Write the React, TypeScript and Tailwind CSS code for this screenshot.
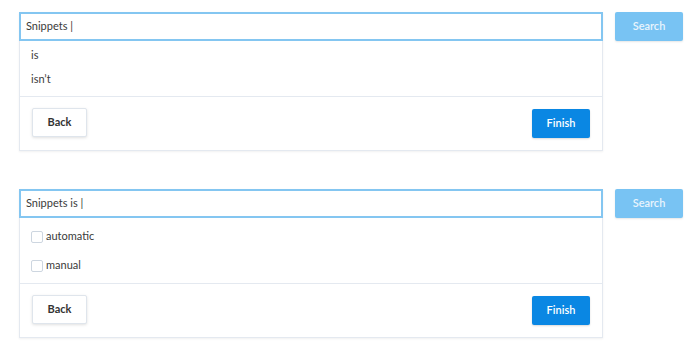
import { useState } from 'react';

interface FilterCardProps {
  query: string;
  options: string[];
  checkable?: boolean;
}

const FilterCard: React.FC<FilterCardProps> = ({ query, options, checkable }) => {
  const [checked, setChecked] = useState<string[]>([]);

  const toggle = (opt: string) =>
    setChecked((prev) => (prev.includes(opt) ? prev.filter((o) => o !== opt) : [...prev, opt]));

  return (
    <div className="flex items-start gap-3">
      <div className="w-[584px] bg-white border border-[#e4e9f0] shadow-[0_1px_2px_rgba(0,0,0,0.06)]">
        <div className="-mt-px -mx-px h-[29px] border-2 border-[#84c6f1] flex items-center px-[5px] text-[11px] text-[#3a3a3a]">
          {query}
        </div>
        <div className={checkable ? 'pt-[4px] pb-[3px]' : 'pt-[2px] pb-[5px]'}>
          {options.map((opt) =>
            checkable ? (
              <label
                key={opt}
                className="flex items-center gap-[3px] h-[29px] pl-[11px] text-[11px] text-[#3a3a3a] cursor-pointer"
              >
                <span
                  onClick={() => toggle(opt)}
                  className={`w-[12px] h-[12px] rounded-[2px] border ${
                    checked.includes(opt) ? 'bg-[#0a87e3] border-[#0a87e3]' : 'border-[#cdd6e0] bg-white'
                  }`}
                />
                <span>{opt}</span>
              </label>
            ) : (
              <div key={opt} className="h-[24px] flex items-center pl-[11px] text-[11px] text-[#3a3a3a]">
                {opt}
              </div>
            ),
          )}
        </div>
        <div className="border-t border-[#e4e9f0] flex items-start justify-between pt-[11px] pb-[12px] pl-[12px] pr-[12px]">
          <button className="w-[55px] h-[29px] rounded-[2px] border border-[#dfe5ec] bg-white shadow-[0_1px_3px_rgba(0,0,0,0.12)] text-[11px] font-bold text-[#333]">
            Back
          </button>
          <button className="mt-[1px] w-[58px] h-[29px] rounded-[2px] bg-[#0a87e3] text-white text-[11px] font-semibold shadow-[0_1px_2px_rgba(0,0,0,0.15)]">
            Finish
          </button>
        </div>
      </div>
      <button className="w-[68px] h-[29px] rounded-[2px] bg-[#78c3f3] text-[#e8f4fd] text-[11px] font-semibold shadow-[0_1px_2px_rgba(0,0,0,0.1)]">
        Search
      </button>
    </div>
  );
};

export default function App() {
  return (
    <div className="w-[700px] h-[350px] bg-white pt-[12px] pl-[19px] font-['Lato','Open_Sans',sans-serif]">
      <div className="flex flex-col gap-[38px]">
        <FilterCard query="Snippets |" options={['is', 'isn’t']} />
        <FilterCard query="Snippets is |" options={['automatic', 'manual']} checkable />
      </div>
    </div>
  );
}
